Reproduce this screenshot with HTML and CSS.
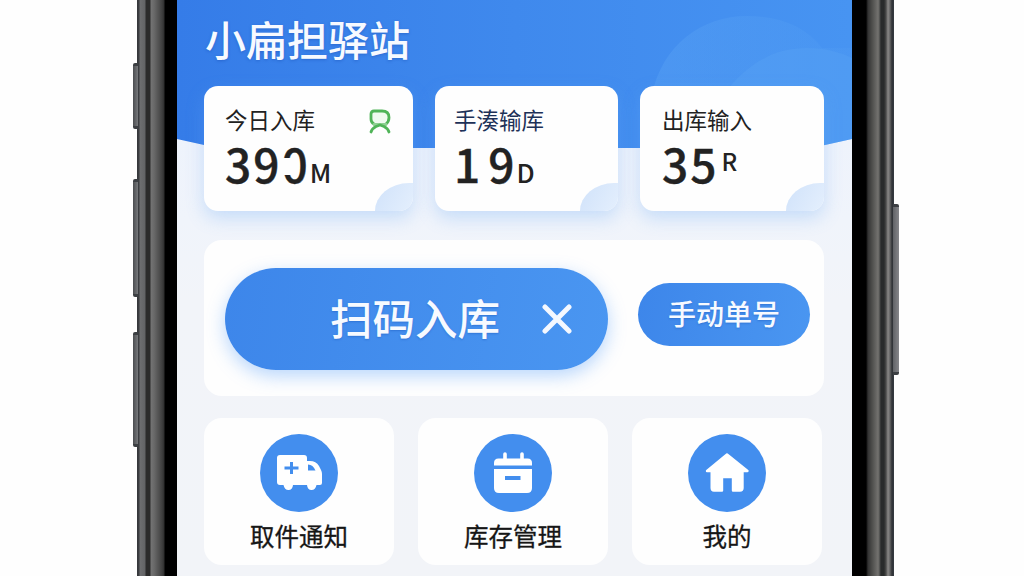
FILE: index.html
```html
<!DOCTYPE html>
<html lang="zh-CN">

<head>
    <meta charset="utf-8">
    <title>小扁担驿站</title>
    <link rel="stylesheet" href="styles.css">
</head>

<body>
    <div class="phone">
        <div class="side side-left">
            <span class="key key-1"></span>
            <span class="key key-2"></span>
            <span class="key key-3"></span>
        </div>

        <div class="screen">
            <svg class="wave" width="675" height="150" viewBox="0 0 675 150">
                <defs>
                    <linearGradient id="sky" x1="0" y1="0" x2="1" y2="0">
                        <stop offset="0" stop-color="#357ce8" />
                        <stop offset="0.5" stop-color="#3f89ed" />
                        <stop offset="1" stop-color="#4794f2" />
                    </linearGradient>
                    <linearGradient id="cloud" x1="0" y1="0" x2="1" y2="0">
                        <stop offset="0" stop-color="#62abf6" stop-opacity="0.3" />
                        <stop offset="1" stop-color="#62abf6" stop-opacity="0.1" />
                    </linearGradient>
                    <clipPath id="hill">
                        <path d="M0 0H675V139L648 145Q635 148 615 148H62Q45 148 27 145L0 139Z" />
                    </clipPath>
                </defs>
                <g clip-path="url(#hill)">
                    <rect width="675" height="150" fill="url(#sky)" />
                    <path d="M475 95C485 45 525 16 570 16C605 16 630 28 645 48H675V150H475Z" fill="url(#cloud)" />
                    <path d="M550 90C575 60 600 48 630 48C650 48 665 53 675 58V150H550Z" fill="#62abf6" fill-opacity="0.22" />
                </g>
            </svg>

            <h1>小扁担驿站</h1>

            <div class="stats">
                <div class="stat">
                    <p class="stat-name">今日入库</p>
                    <p class="stat-value">39<span class="open-zero">0</span><small>M</small></p>
                    <svg class="badge" width="22" height="25" viewBox="0 0 22 25" fill="none" stroke="#50b458" stroke-width="2.800" stroke-linecap="round" stroke-linejoin="round">
                        <path d="M5 15Q2 13.500 2 10V5Q2 2 5 2H13Q20 2 20 8.500Q20 12.500 17 15Z" fill="#effaef" stroke="none" />
                        <path d="M5 15Q2 13.500 2 10V5Q2 2 5 2H13Q20 2 20 8.500Q20 12.500 17 15" />
                        <path d="M5 15.500H17" stroke="#8fd093" />
                        <path d="M2 23Q3 19.500 7 17.500L11 16L15 17.500Q19 19.500 20 23" />
                    </svg>
                </div>
                <div class="stat stat-mid">
                    <p class="stat-name navy">手湊输库</p>
                    <p class="stat-value"><span class="one">1</span>9<small>D</small></p>
                </div>
                <div class="stat stat-last">
                    <p class="stat-name">出库输入</p>
                    <p class="stat-value">35<small class="up">R</small></p>
                </div>
            </div>

            <div class="scan">
                <button class="scan-btn">
                    <span>扫码入库</span>
                    <svg width="30" height="30" viewBox="0 0 30 30" stroke="#f4f8ff" stroke-width="5" stroke-linecap="round">
                        <path d="M3 3L27 27M27 3L3 27" />
                    </svg>
                </button>
                <button class="manual-btn">手动单号</button>
            </div>

            <div class="menu">
                <div class="menu-item">
                    <svg width="78" height="78" viewBox="0 0 78 78">
                        <circle cx="39" cy="39" r="39" fill="#438eee" />
                        <path fill="#fff" d="M20 21H44Q47 21 47 24V27H50Q56 27 59 32L61 36Q62 38 62 40V49Q62 51 60 51H56.500Q55.500 56 51.500 56T47 51H33Q32.500 56 28.500 56T23.500 51H20Q17 51 17 48V24Q17 21 20 21Z" />
                        <path fill="#438eee" d="M48 30.500Q53 30.500 55.500 36.500H48Z" />
                        <path stroke="#438eee" stroke-width="3" d="M24.500 34H38.500M31.500 28V40" />
                    </svg>
                    <p>取件通知</p>
                </div>
                <div class="menu-item">
                    <svg width="78" height="78" viewBox="0 0 78 78">
                        <circle cx="39" cy="39" r="39" fill="#438eee" />
                        <path stroke="#fff" stroke-width="3.600" stroke-linecap="round" d="M31 20V27M48 20V27" />
                        <path fill="#fff" d="M20 31.500V29Q20 24.500 24.500 24.500H53.500Q58 24.500 58 29V31.500Z" />
                        <path fill="#fff" d="M20 35H58V54Q58 59 53 59H25Q20 59 20 54Z" />
                        <path fill="#438eee" d="M31 42H46.500V46H31Z" />
                    </svg>
                    <p>库存管理</p>
                </div>
                <div class="menu-item">
                    <svg width="78" height="78" viewBox="0 0 78 78">
                        <circle cx="39" cy="39" r="39" fill="#438eee" />
                        <path fill="#fff" stroke="#fff" stroke-width="2.400" stroke-linejoin="round" d="M39 20.500L59.500 37H54.500V54Q54.500 56.500 52 56.500H45V43H34V56.500H26Q23.700 56.500 23.700 54V37H19Z" />
                    </svg>
                    <p>我的</p>
                </div>
            </div>
        </div>

        <div class="side side-right">
            <span class="key key-power"></span>
        </div>
    </div>
</body>

</html>
```

FILE: styles.css
```css
html, body {
    width: 100%;
    height: 100%;
    overflow: hidden;
}
body {
    margin: 0;
    background-color: #fefefe;
    font-family: "Noto Sans CJK SC", sans-serif;
    color: #222;
}
h1, p {
    margin: 0;
}
svg {
    display: block;
    flex: none;
}
.phone {
    display: flex;
    width: 757px;
    height: 576px;
    margin-left: 137px;
}

/* phone frame */
.side {
    position: relative;
    flex: none;
}
.side-left {
    width: 40px;
    background: linear-gradient(to right, #34363a 0, #3d3f42 2px, #6d6e70 3px, #626365 8px, #2b2b2b 9px, #2b2b2b 13px, #737373 14px, #696969 17px, #404040 25px, #303030 27px, #000 28px, #000 40px);
}
.side-right {
    width: 42px;
    background: linear-gradient(to right, #000 0, #000 14px, #333 16px, #4d4d4b 20px, #73726f 26px, #626260 27px, #292b2b 29px, #292b2b 32px, #4b4b4a 34px, #8a8987 36px, #656565 38px, #303337 40px, #353a40 42px);
}
.key {
    position: absolute;
    left: -4px;
    width: 5px;
    box-sizing: border-box;
    background: linear-gradient(to right, #4b4d50, #77797c);
    border-top: 3px solid #3c3f43;
    border-bottom: 3px solid #3c3f43;
    border-radius: 2px 0 0 2px;
}
.key-1 {
    top: 63px;
    height: 66px;
}
.key-2 {
    top: 179px;
    height: 118px;
}
.key-3 {
    top: 332px;
    height: 115px;
}
.key-power {
    left: 41px;
    top: 204px;
    width: 6px;
    height: 171px;
    background: linear-gradient(to right, #606266, #85868a);
    border-radius: 0 2px 2px 0;
}

.screen {
    position: relative;
    width: 675px;
    height: 576px;
    box-sizing: border-box;
    padding: 9px 28px 0 27px;
    background: linear-gradient(#eef3fc 140px, #f0f4fb 220px, #f2f4f9 300px, #f2f4f8);
}
.wave {
    position: absolute;
    left: 0;
    top: 0;
}
h1 {
    position: relative;
    height: 77px;
    padding-left: 1px;
    font-size: 41px;
    line-height: 58px;
    font-weight: 500;
    color: #f7faff;
    text-shadow: 0 1px 3px rgba(20, 70, 170, 0.4);
}

/* counters */
.stats {
    position: relative;
    display: grid;
    grid-template-columns: 209px 183px 184px;
    gap: 22px;
}
.stat {
    position: relative;
    height: 125px;
    box-sizing: border-box;
    padding: 16px 20px 0 21px;
    border-radius: 14px;
    background: #fefefe;
    box-shadow: 0 7px 18px rgba(100, 165, 245, 0.3);
}
.stat::after {
    content: "";
    position: absolute;
    right: 0;
    bottom: 0;
    width: 38px;
    height: 28px;
    border-radius: 34px 0 14px 0 / 28px 0 14px 0;
    background: linear-gradient(120deg, #d0e2fa, #e4effd);
}
.stat-mid {
    padding-left: 19px;
}
.stat-last {
    padding-left: 22px;
}
.stat-name {
    font-size: 22.5px;
    line-height: 34px;
}
.navy {
    color: #1d3158;
}
.stat-value {
    display: flex;
    align-items: baseline;
    font-size: 46px;
    line-height: 54px;
    font-weight: 500;
    letter-spacing: 2px;
    -webkit-text-stroke: 0.400px #222;
}
.stat-value small {
    font-size: 26px;
    letter-spacing: 0;
    -webkit-text-stroke: 0;
}
.stat-value .up {
    position: relative;
    top: -12px;
    margin-left: 3px;
    font-size: 24px;
}
.one {
    margin-right: 6px;
}
.open-zero {
    position: relative;
}
.open-zero::after {
    content: "";
    position: absolute;
    left: 0;
    top: 22px;
    width: 11px;
    height: 17px;
    background: #fefefe;
}
.badge {
    position: absolute;
    right: 22px;
    top: 23px;
}

/* scan panel */
.scan {
    display: flex;
    align-items: flex-start;
    height: 156px;
    box-sizing: border-box;
    margin-top: 29px;
    padding: 28px 14px 0 21px;
    border-radius: 18px;
    background: #fefefe;
}
button {
    border: none;
    padding: 0;
    font-family: inherit;
    font-weight: 500;
    color: #f7faff;
    background: linear-gradient(100deg, #3d86ea, #4a96f1);
    text-shadow: 0 1px 2px rgba(20, 80, 180, 0.4);
}
.scan-btn {
    display: flex;
    align-items: center;
    width: 383px;
    height: 102px;
    padding-left: 105px;
    border-radius: 51px;
    font-size: 42.500px;
    box-shadow: 0 6px 18px rgba(80, 155, 250, 0.4);
}
.scan-btn span {
    padding-bottom: 6px;
}
.scan-btn svg {
    margin-left: 42px;
}
.manual-btn {
    width: 172px;
    height: 63px;
    margin: 15px 0 0 30px;
    padding-bottom: 3px;
    border-radius: 32px;
    font-size: 28px;
}

/* bottom menu */
.menu {
    display: grid;
    grid-template-columns: repeat(3, 190px);
    gap: 24px;
    margin-top: 22px;
}
.menu-item {
    display: flex;
    flex-flow: column;
    align-items: center;
    height: 147px;
    box-sizing: border-box;
    padding-top: 16px;
    border-radius: 18px;
    background: #fefefe;
}
.menu-item p {
    margin-top: 6px;
    font-size: 24.500px;
    line-height: 36px;
    color: #161616;
    -webkit-text-stroke: 0.300px #161616;
}
```
